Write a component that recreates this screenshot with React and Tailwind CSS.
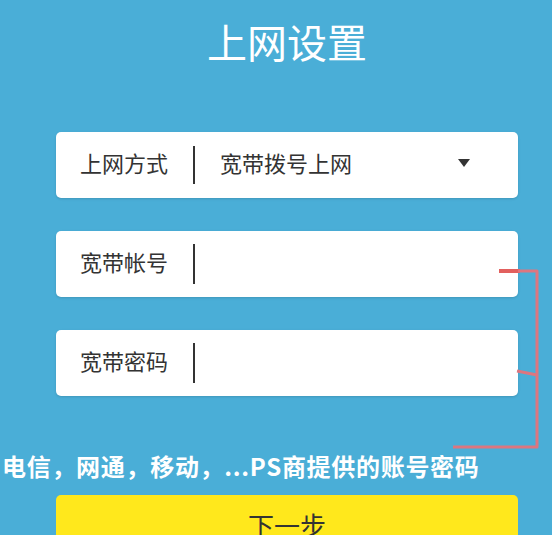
export default function App() {
  const fields = [
    { id: 'account', label: '宽带帐号' },
    { id: 'password', label: '宽带密码' },
  ];

  return (
    <div
      className="relative w-[552px] h-[535px] overflow-hidden bg-[#4aaed7]"
      style={{ fontFamily: '"Noto Sans CJK SC", "Noto Sans", sans-serif' }}
    >
      <div className="px-[56px]">
        <h1 className="mt-[18px] w-[462px] text-center text-[40px] leading-[46px] font-normal text-white">上网设置</h1>
      </div>

      <div className="mt-[68px] px-[56px] flex flex-col gap-[33px]">
        {/* 上网方式 select */}
        <div className="h-[66px] w-[462px] rounded-[5px] bg-white shadow-sm flex items-center pl-[24px] pr-[48px] text-[#333]">
          <span className="text-[22px] leading-none w-[89px] -translate-y-[3px]">上网方式</span>
          <span className="ml-[24px] w-[2px] h-[38px] bg-[#333]" />
          <span className="ml-[25px] text-[22px] leading-none flex-1 -translate-y-[3px]">宽带拨号上网</span>
          <svg width="12" height="8" viewBox="0 0 12 8" className="-mt-[4px]">
            <path d="M0 0 L12 0 L6 8 Z" fill="#333" />
          </svg>
        </div>

        {fields.map((f) => (
          <div
            key={f.id}
            className="h-[66px] w-[462px] rounded-[5px] bg-white shadow-sm flex items-center pl-[24px] text-[#333]"
          >
            <span className="text-[22px] leading-none w-[89px] -translate-y-[3px]">{f.label}</span>
            <span className="ml-[24px] w-[2px] h-[40px] bg-[#333]" />
          </div>
        ))}
      </div>

      <p className="mt-[55px] pl-[2px] text-[24px] leading-[30px] font-bold text-white whitespace-nowrap tracking-[0.7px]">
        电信，网通，移动，...PS商提供的账号密码
      </p>

      <div className="mt-[14px] ml-[56px] w-[462px] h-[60px] rounded-[5px] bg-[#ffe81c] flex items-center justify-center text-[26px] text-[#333] leading-none">
        下一步
      </div>

      {/* red annotation bracket */}
      <svg className="absolute left-0 top-0 pointer-events-none" width="552" height="535">
        <path d="M499 271 L520 271" stroke="#e2605e" strokeWidth="4" fill="none" />
        <path
          d="M518 271 L537 271 L537 447 L453 447"
          stroke="#dc7680"
          strokeWidth="3"
          fill="none"
          strokeLinejoin="round"
        />
        <path d="M517 371 L537 375" stroke="#dc7680" strokeWidth="3" fill="none" />
      </svg>
    </div>
  );
}
